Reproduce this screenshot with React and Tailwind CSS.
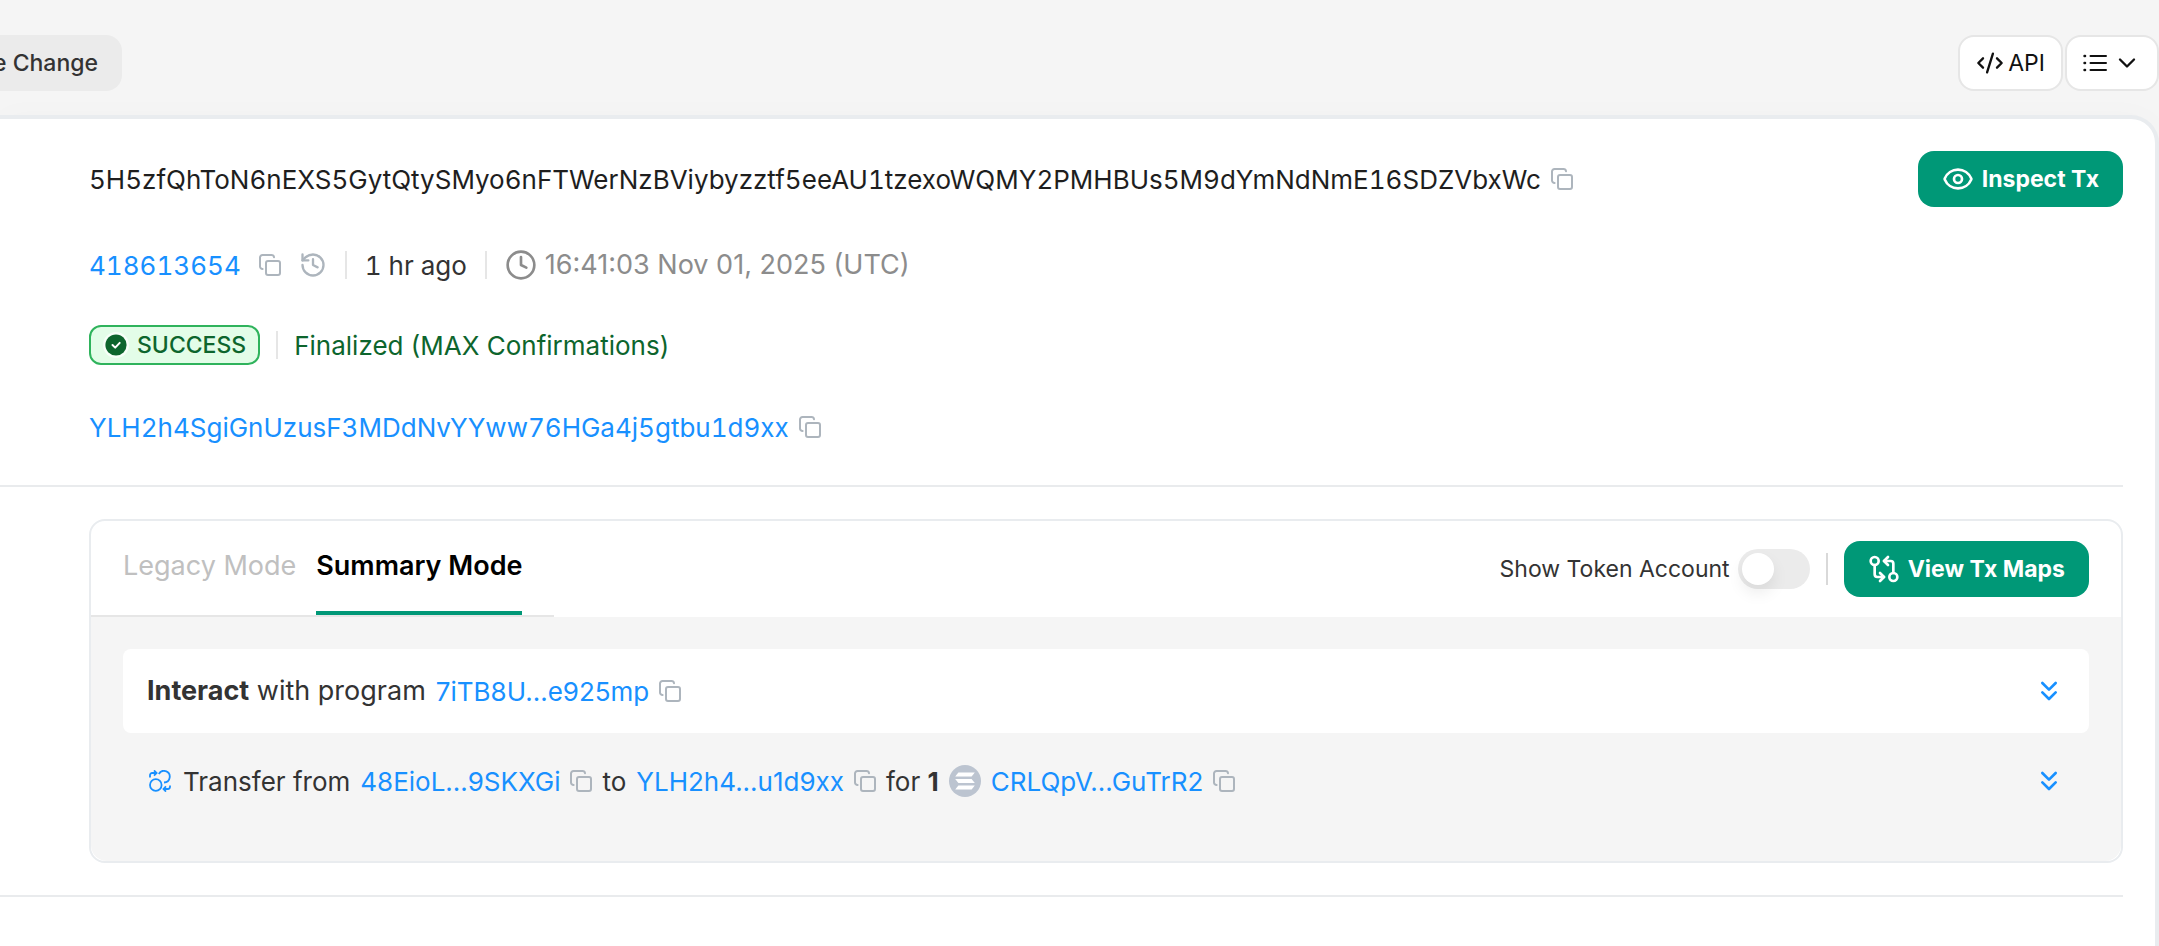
import React from 'react';
import {
  ChevronDown,
  ChevronsDown,
  Clock,
  CodeXml,
  Eye,
  GitCompareArrows,
  History,
} from 'lucide-react';

const CopyButton = () => (
  <button type="button" aria-label="Copy" className="shrink-0 text-[#adb5bd]">
    <svg width="22" height="22" viewBox="0 0 22 22" fill="none" stroke="currentColor" strokeWidth="2" strokeLinecap="round" className="block">
      <rect x="7" y="7" width="14" height="14" rx="2" />
      <path d="M3.6 15A2.5 2.5 0 0 1 1 12.500V3.500A2.500 2.500 0 0 1 3.500 1H12.500A2.500 2.500 0 0 1 15 3.200" />
    </svg>
  </button>
);

const Address = ({ children }) => (
  <a href="#" className="text-[#1890ff]">
    {children}
  </a>
);

const Separator = () => <span className="h-7 w-[2px] shrink-0 bg-[#e6e6e6]" />;

const ListIcon = () => (
  <svg width="24" height="18" viewBox="0 0 24 18" fill="none" stroke="currentColor" strokeWidth="2" strokeLinecap="round">
    <path d="M7.500 2H23M7.500 9H23M7.500 16H23" />
    <path d="M1.500 2h.6M1.500 9h.6M1.500 16h.6" strokeWidth="2.400" />
  </svg>
);

const CheckBadge = () => (
  <svg width="26" height="26" viewBox="0 0 26 26" fill="none">
    <circle cx="13" cy="13" r="13" fill="#fff" fillOpacity="0.7" />
    <circle cx="13" cy="13" r="10.600" fill="#0d652d" />
    <path d="m9.500 13 2.700 2.600 4.500-4.700" stroke="#fff" strokeWidth="2" strokeLinecap="round" strokeLinejoin="round" />
  </svg>
);

const TransferIcon = () => (
  <svg width="22" height="22" viewBox="0 0 22 22" fill="none" stroke="#1890ff" strokeWidth="1.800" className="mx-[2px]">
    <circle cx="6.800" cy="15" r="5.800" />
    <path d="M9.800 4A5.800 5.800 0 1 1 15 12.500" />
    <path d="M1 7.500V5.200a2.200 2.200 0 0 1 2.200-2.200H7" />
    <path d="M5 .4 7.600 3 5 5.600" />
    <path d="M21 15.500v1.300a2.200 2.200 0 0 1-2.200 2.200H15" />
    <path d="M17 16.400 14.500 19l2.500 2.600" />
  </svg>
);

const SolIcon = () => (
  <svg width="32" height="32" viewBox="0 0 32 32" className="shrink-0">
    <circle cx="16" cy="16" r="16" fill="#bcc4d0" />
    <g fill="#fff">
      <path d="M9.400 7.600h16.400l-3.200 4H6.200z" />
      <path d="M6.200 14h16.400l3.200 4H9.400z" />
      <path d="M9.400 20.400h16.400l-3.200 4H6.200z" />
    </g>
  </svg>
);

const TopBar = () => (
  <header className="flex items-center justify-between pt-[35px]">
    <button
      type="button"
      className="flex h-14 w-[122px] items-center justify-end overflow-hidden rounded-r-2xl bg-[#ebebeb] pr-6 text-[23px] font-medium whitespace-nowrap text-[#333]"
    >
      Balance Change
    </button>
    <div className="flex gap-[2px] text-[#111]">
      <button type="button" className="flex h-14 items-center gap-1 rounded-2xl border-2 border-[#e6e6e6] bg-white px-4 text-[23px]">
        <CodeXml size={28} />
        API
      </button>
      <button type="button" aria-label="More" className="flex h-14 items-center gap-[6px] rounded-2xl border-2 border-[#e6e6e6] bg-white px-4">
        <ListIcon />
        <ChevronDown size={28} />
      </button>
    </div>
  </header>
);

const Overview = () => (
  <section className="pl-[89px] text-[26px] text-[#333]">
    <div className="flex h-14 items-center justify-between">
      <div className="flex items-center gap-[10px] text-[#1e1e1e] tabular-nums">
        <span>5H5zfQhToN6nEXS5GytQtySMyo6nFTWerNzBViybyzztf5eeAU1tzexoWQMY2PMHBUs5M9dYmNdNmE16SDZVbxWc</span>
        <CopyButton />
      </div>
      <button type="button" className="flex h-14 items-center gap-2 rounded-2xl bg-[#009877] px-6 text-[23px] font-bold text-white">
        <Eye size={32} />
        Inspect Tx
      </button>
    </div>

    <div className="mt-[38px] flex h-10 items-center gap-[18px] tabular-nums">
      <Address>418613654</Address>
      <CopyButton />
      <button type="button" aria-label="History" className="text-[#adb5bd]">
        <History size={28} className="block" />
      </button>
      <Separator />
      <span>1 hr ago</span>
      <Separator />
      <span className="flex items-center gap-2 text-[27px] text-[#8c8c8c] normal-nums">
        <Clock size={32} />
        16:41:03 Nov 01, 2025 (UTC)
      </span>
    </div>

    <div className="mt-10 flex h-10 items-center gap-4">
      <span className="flex h-10 items-center gap-2 rounded-xl border-2 border-[#2fb35c] bg-[#e3fde8] px-3 text-[23px] font-medium text-[#0d652d]">
        <CheckBadge />
        SUCCESS
      </span>
      <Separator />
      <span className="text-[#0d652d]">Finalized (MAX Confirmations)</span>
    </div>

    <div className="mt-[42px] flex h-10 items-center gap-[10px] tabular-nums">
      <Address>YLH2h4SgiGnUzusF3MDdNvYYww76HGa4j5gtbu1d9xx</Address>
      <CopyButton />
    </div>
  </section>
);

const PanelHeader = () => (
  <div className="flex h-24 items-center justify-between pr-8">
    <div role="tablist" className="flex h-24 gap-5 border-b-2 border-[#e6e6e6] px-8 text-[27px]">
      <button type="button" role="tab" aria-selected="false" className="border-b-4 border-transparent text-[#c0c0c0]">
        Legacy Mode
      </button>
      <button type="button" role="tab" aria-selected="true" className="border-b-4 border-[#009877] font-semibold text-black">
        Summary Mode
      </button>
    </div>
    <div className="flex items-center gap-4">
      <div className="flex items-center gap-2">
        <label htmlFor="token-account" className="text-[23px] text-[#333]">
          Show Token Account
        </label>
        <input
          id="token-account"
          type="checkbox"
          role="switch"
          className="flex h-10 w-[72px] appearance-none items-center rounded-full bg-[#ebebeb] px-1 before:size-8 before:rounded-full before:bg-white before:shadow-[0_8px_16px_rgba(0,0,0,0.08)] checked:justify-end checked:bg-[#009877]"
        />
      </div>
      <span className="h-8 w-[2px] bg-[#d9d9d9]" />
      <button type="button" className="flex h-14 items-center gap-2 rounded-2xl bg-[#009877] px-6 text-[23px] font-bold text-white">
        <GitCompareArrows size={32} />
        View Tx Maps
      </button>
    </div>
  </div>
);

const ExpandButton = () => (
  <button type="button" aria-label="Expand" className="text-[#1890ff]">
    <ChevronsDown size={32} className="block" />
  </button>
);

const Actions = () => (
  <div className="rounded-b-2xl bg-[#f5f5f5] p-8 text-[26px] text-[#333]">
    <div className="flex h-[84px] items-center justify-between rounded-lg bg-white px-6">
      <div className="flex items-center gap-[10px]">
        <span className="text-[27px]">
          <b>Interact</b> with program
        </span>
        <Address>7iTB8U...e925mp</Address>
        <CopyButton />
      </div>
      <ExpandButton />
    </div>
    <div className="flex h-24 items-center justify-between px-6">
      <div className="flex items-center gap-[10px]">
        <TransferIcon />
        <span>Transfer from</span>
        <Address>48EioL...9SKXGi</Address>
        <CopyButton />
        <span>to</span>
        <Address>YLH2h4...u1d9xx</Address>
        <CopyButton />
        <span>
          for <b>1</b>
        </span>
        <SolIcon />
        <Address>CRLQpV...GuTrR2</Address>
        <CopyButton />
      </div>
      <ExpandButton />
    </div>
  </div>
);

export default function App() {
  return (
    <div className="flex min-h-screen flex-col bg-[#f5f5f5] font-['Inter',sans-serif]">
      <TopBar />
      <main className="mt-6 grow rounded-tr-[28px] border-t-4 border-r-4 border-[#e9ecef] bg-white pt-8 pr-8 shadow-[0_0_32px_rgba(0,0,0,0.02)]">
        <Overview />
        <hr className="mt-[38px] border-t-2 border-[#e9ebed]" />
        <section className="mt-8 ml-[89px] rounded-2xl border-2 border-[#e9ecef]">
          <PanelHeader />
          <Actions />
        </section>
        <hr className="mt-8 border-t-2 border-[#e9ebed]" />
      </main>
    </div>
  );
}
